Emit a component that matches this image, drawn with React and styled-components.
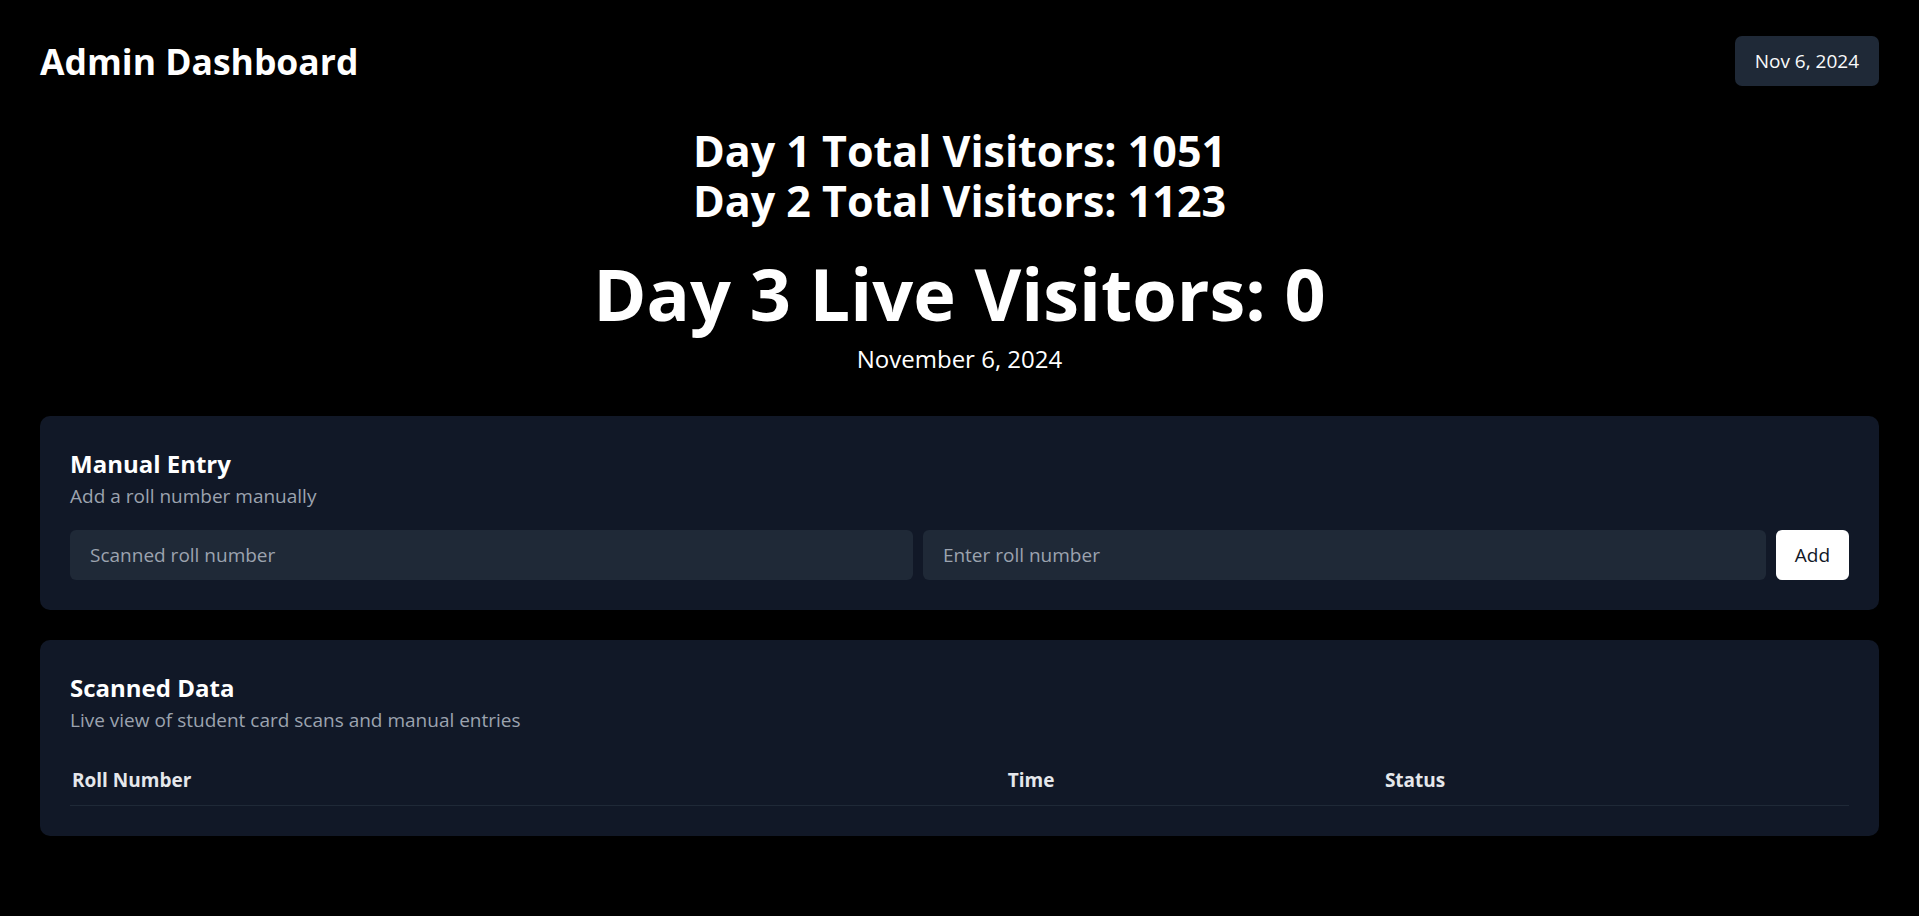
import React, { useState } from 'react';
import styled, { createGlobalStyle } from 'styled-components';

const GlobalStyle = createGlobalStyle`
  html, body {
    margin: 0;
    padding: 0;
    background-color: #000;
  }
  body {
    font-family: 'Open Sans', 'Noto Sans', sans-serif;
    color: #fff;
  }
  * {
    box-sizing: border-box;
  }
`;

const Page = styled.div`
  min-height: 100vh;
  padding: 36px 40px 40px;
  display: flex;
  flex-direction: column;
  background-color: #000;
`;

const Header = styled.header`
  display: flex;
  justify-content: space-between;
  align-items: center;
  height: 50px;
`;

const Title = styled.h1`
  margin: 0;
  font-size: 35.5px;
  line-height: 45px;
  font-weight: 700;
  color: #fff;
`;

const DateBadge = styled.div`
  background-color: #1f2937;
  color: #f9fafb;
  font-size: 19px;
  line-height: 30px;
  padding: 10px 20px;
  border-radius: 7px;
`;

const Stats = styled.section`
  display: flex;
  flex-direction: column;
  align-items: center;
  margin: 40px 0 40px;
  text-align: center;
`;

const DayTotal = styled.h2`
  margin: 0;
  font-size: 43px;
  line-height: 50px;
  font-weight: 700;
`;

const LiveCount = styled.h2`
  margin: 30px 0 0;
  font-size: 72px;
  line-height: 75px;
  font-weight: 700;
`;

const LiveDate = styled.p`
  margin: 10px 0 0;
  font-size: 24px;
  line-height: 35px;
`;

const Cards = styled.div`
  display: flex;
  flex-direction: column;
  gap: 30px;
`;

const Card = styled.section`
  background-color: #111827;
  border-radius: 10px;
  padding: 30px;
`;

const CardTitle = styled.h3`
  margin: 0;
  font-size: 24px;
  line-height: 35px;
  font-weight: 700;
  color: #fff;
`;

const CardSubtitle = styled.p`
  margin: 0;
  font-size: 19px;
  line-height: 30px;
  color: #9ca3af;
`;

const EntryRow = styled.form`
  display: flex;
  gap: 10px;
  margin-top: 19px;
`;

const TextField = styled.input`
  flex: 1;
  min-width: 0;
  height: 50px;
  padding: 0 20px;
  border: none;
  border-radius: 6px;
  background-color: #1f2937;
  color: #fff;
  font-family: inherit;
  font-size: 19px;
  outline: none;

  &::placeholder {
    color: #9ca3af;
  }
`;

const AddButton = styled.button`
  height: 50px;
  padding: 0 19px;
  border: none;
  border-radius: 6px;
  background-color: #fff;
  color: #111827;
  font-family: inherit;
  font-size: 19px;
  cursor: pointer;
`;

const Table = styled.table`
  width: 100%;
  margin-top: 20px;
  border-collapse: collapse;
`;

const HeadCell = styled.th`
  width: ${(props) => props.width || 'auto'};
  height: 50px;
  padding: 0 0 0 2px;
  text-align: left;
  vertical-align: middle;
  font-size: 19px;
  font-weight: 700;
  color: #e5e7eb;
  border-bottom: 1px solid #1f2937;
`;

const Cell = styled.td`
  height: 50px;
  padding: 0 0 0 2px;
  font-size: 19px;
  color: #d1d5db;
  border-bottom: 1px solid #1f2937;
`;

const App = () => {
  const [scanned, setScanned] = useState('');
  const [manual, setManual] = useState('');
  const [entries, setEntries] = useState([]);

  const handleAdd = (e) => {
    e.preventDefault();
    if (!manual.trim()) return;
    setEntries([
      ...entries,
      { roll: manual.trim(), time: new Date().toLocaleTimeString(), status: 'Manual' },
    ]);
    setManual('');
  };

  return (
    <Page>
      <GlobalStyle />
      <Header>
        <Title>Admin Dashboard</Title>
        <DateBadge>Nov 6, 2024</DateBadge>
      </Header>

      <Stats>
        <DayTotal>Day 1 Total Visitors: 1051</DayTotal>
        <DayTotal>Day 2 Total Visitors: 1123</DayTotal>
        <LiveCount>Day 3 Live Visitors: {entries.length}</LiveCount>
        <LiveDate>November 6, 2024</LiveDate>
      </Stats>

      <Cards>
        <Card>
          <CardTitle>Manual Entry</CardTitle>
          <CardSubtitle>Add a roll number manually</CardSubtitle>
          <EntryRow onSubmit={handleAdd}>
            <TextField
              placeholder='Scanned roll number'
              value={scanned}
              onChange={(e) => setScanned(e.target.value)}
            />
            <TextField
              placeholder='Enter roll number'
              value={manual}
              onChange={(e) => setManual(e.target.value)}
            />
            <AddButton type='submit'>Add</AddButton>
          </EntryRow>
        </Card>

        <Card>
          <CardTitle>Scanned Data</CardTitle>
          <CardSubtitle>Live view of student card scans and manual entries</CardSubtitle>
          <Table>
            <thead>
              <tr>
                <HeadCell width='52.6%'>Roll Number</HeadCell>
                <HeadCell width='21.2%'>Time</HeadCell>
                <HeadCell>Status</HeadCell>
              </tr>
            </thead>
            <tbody>
              {entries.map((entry, index) => (
                <tr key={index}>
                  <Cell>{entry.roll}</Cell>
                  <Cell>{entry.time}</Cell>
                  <Cell>{entry.status}</Cell>
                </tr>
              ))}
            </tbody>
          </Table>
        </Card>
      </Cards>
    </Page>
  );
};

export default App;
